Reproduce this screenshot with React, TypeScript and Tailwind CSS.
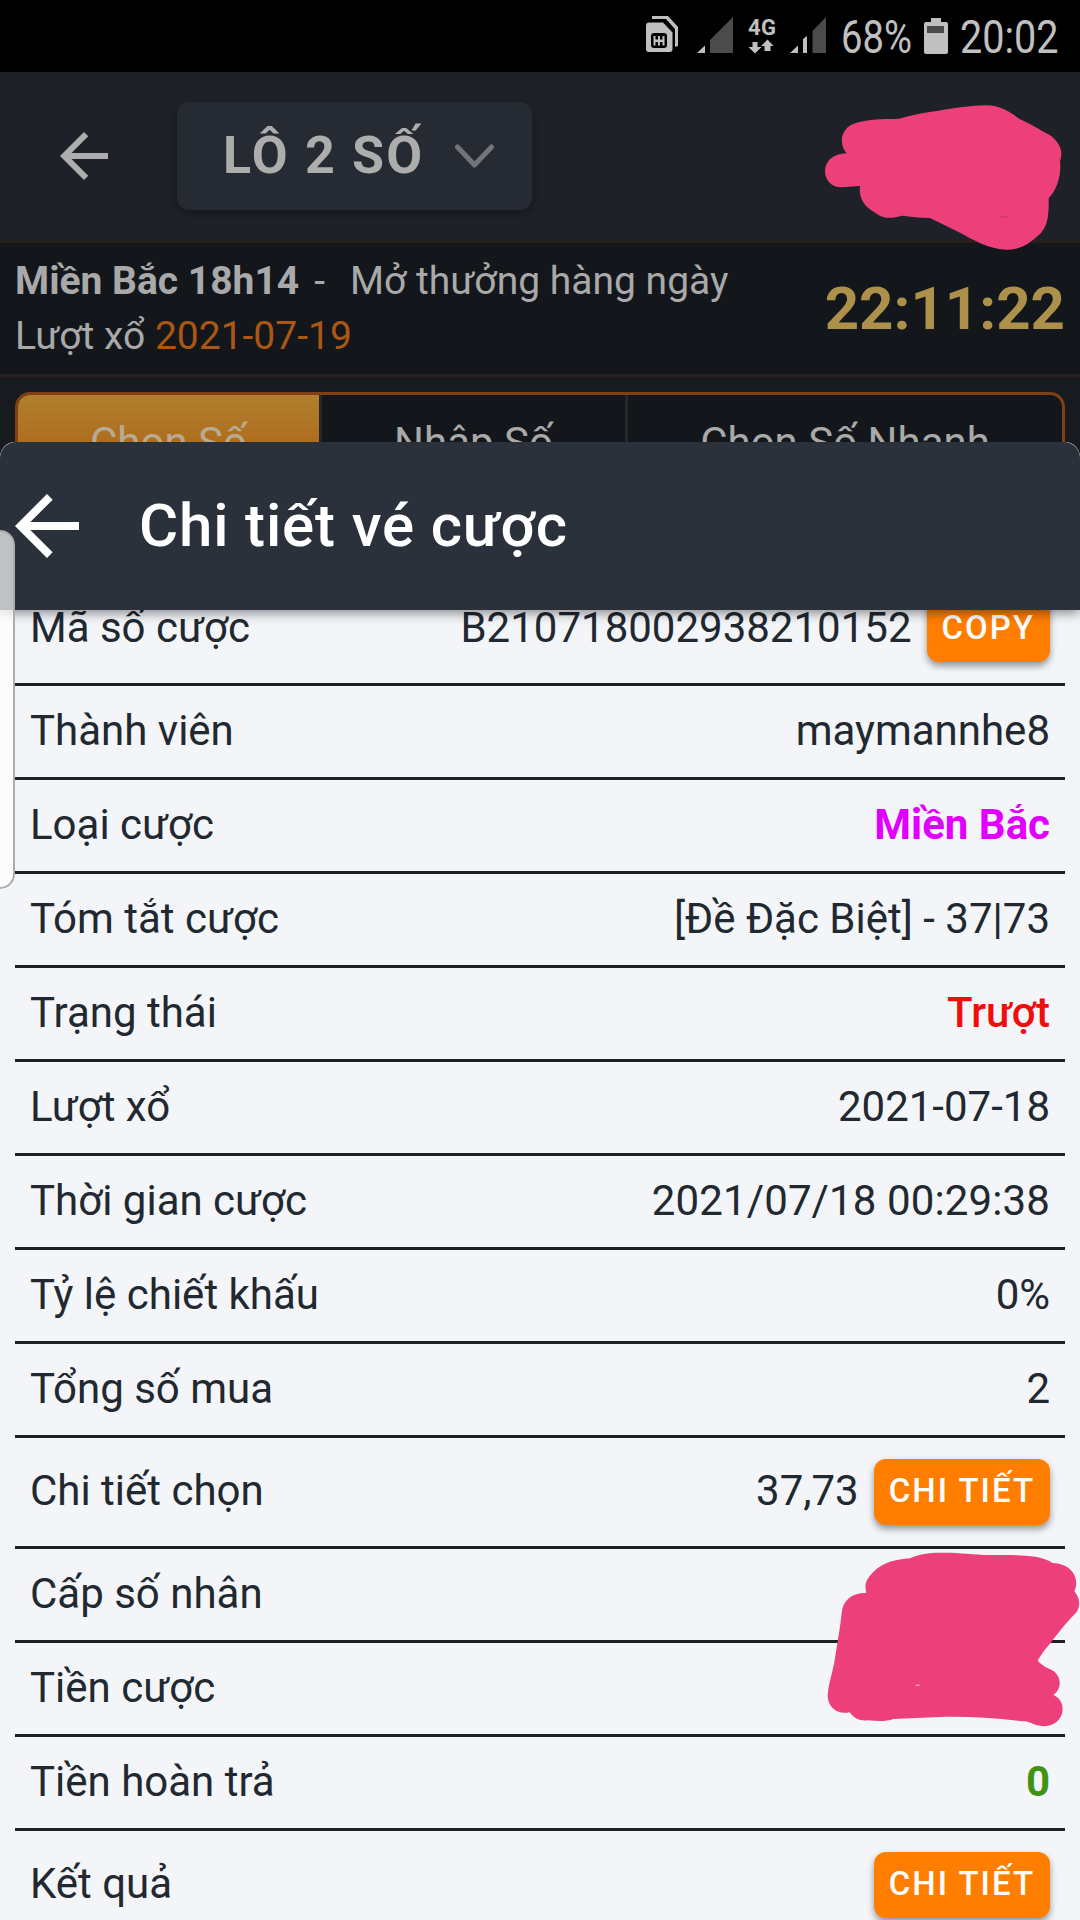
import type { ReactNode } from "react";
import clsx from "clsx";

interface DetailRow {
    label: string;
    value?: string;
    valueClass?: string;
    action?: string;
}

const rows: DetailRow[] = [
    { label: "Mã số cược", value: "B210718002938210152", action: "COPY" },
    { label: "Thành viên", value: "maymannhe8" },
    { label: "Loại cược", value: "Miền Bắc", valueClass: "font-bold text-[#e100ff]" },
    { label: "Tóm tắt cược", value: "[Đề Đặc Biệt] - 37|73" },
    { label: "Trạng thái", value: "Trượt", valueClass: "font-medium text-[#f20d0d]" },
    { label: "Lượt xổ", value: "2021-07-18" },
    { label: "Thời gian cược", value: "2021/07/18 00:29:38", valueClass: "tracking-[0.12px]" },
    { label: "Tỷ lệ chiết khấu", value: "0%" },
    { label: "Tổng số mua", value: "2" },
    { label: "Chi tiết chọn", value: "37,73", action: "CHI TIẾT" },
    { label: "Cấp số nhân" },
    { label: "Tiền cược" },
    { label: "Tiền hoàn trả", value: "0", valueClass: "font-bold text-[#3f9214]" },
    { label: "Kết quả", action: "CHI TIẾT" },
];

function ArrowBack({ className }: { className?: string }) {
    return (
        <svg viewBox="4 4 16 16" fill="currentColor" className={className}>
            <path d="M20 11H7.83l5.59-5.59L12 4l-8 8 8 8 1.41-1.41L7.83 13H20v-2z" />
        </svg>
    );
}

function StatusBar() {
    return (
        <div className="flex h-[72px] items-center bg-black text-[#c0c0c0]">
            {/* SIM, signal and network icons */}
            <svg viewBox="620 0 210 72" className="ml-[620px] h-[72px] w-[210px] shrink-0" fill="currentColor">
                <path d="M652 16h16l10 11v19l-3 1V29l-9-10h-14z" />
                <path d="M649 22.500h14l9.500 10V49q0 3-3 3H649q-3 0-3-3V25.500q0-3 3-3z" />
                <rect x="651" y="33" width="16" height="15" rx="3" fill="#000" />
                <path d="M653.500 36h2v3.500h2.500V36h2v3.500h2.500V36h2v9.500h-2V42H660v3.500h-2V42h-2.500v3.500h-2z" />
                <path d="M697 53l8-7.500V53z" />
                <path d="M710 53V40l23-23v36z" fill="#4b4b4b" />
                <path d="M752.500 42h5v5h4l-6.500 6.500-6.500-6.500h4z" />
                <path d="M764.500 51h6v-5h3l-6-6.500-6.500 6.500h3.500z" />
                <path d="M790 53l8-7.500V53zM803 53V39l4-3v17z" />
                <path d="M812.500 53V31L826 17v36z" fill="#4b4b4b" />
                <text x="748" y="35" fontSize="22" fontWeight="700" className="font-[Roboto]" textLength="28">4G</text>
            </svg>
            <span className="mt-[2px] ml-[11px] w-[71px] shrink-0 origin-left scale-x-[0.83] text-[46px]">68%</span>
            <svg viewBox="0 0 24 36" className="ml-[12px] h-[36px] w-[24px] shrink-0" fill="currentColor">
                <path d="M7 0h10v4h5q2 0 2 2v28q0 2-2 2H2q-2 0-2-2V6q0-2 2-2h5z" />
                <path d="M3 8h17v7H3z" fill="#4b4b4b" />
            </svg>
            <span className="mt-[2px] ml-[12px] w-[100px] shrink-0 origin-left scale-x-[0.86] text-[46px]">20:02</span>
        </div>
    );
}

function AppHeader() {
    return (
        <div className="relative flex h-[171px] items-center border-b-[3px] border-[#281e1b] bg-[#1e2228]">
            <ArrowBack className="ml-[60px] size-12 shrink-0 text-[#adadad]" />
            <div className="ml-[69px] -mt-px flex h-[108px] w-[355px] items-center rounded-xl bg-[#262a32] pl-[46px] shadow-[0_3px_10px_rgba(0,0,0,0.35)]">
                <span className="w-[232px] text-[52px] leading-none font-bold tracking-[2.2px] whitespace-nowrap text-[#adadad]">
                    LÔ 2 SỐ
                </span>
                <svg viewBox="0 0 40 24" className="h-6 w-10 text-[#73747a]" fill="none" stroke="currentColor" strokeWidth="5" strokeLinecap="round" strokeLinejoin="round">
                    <path d="M2.500 3l17 18L36.500 3" />
                </svg>
            </div>
            {/* Marker over the balance */}
            <svg viewBox="0 0 840 486" className="absolute top-[18px] left-[800px] z-10 h-[162px] w-[280px]" fill="#ed407a">
                <path d="M140 190C116 162 122 120 157 103C190 88 245 87 298 86C330 76 360 70 395 65C450 58 500 46 560 46C600 46 630 66 660 88C690 100 725 124 753 137C782 163 790 184 780 213C785 255 770 302 746 324C747 375 744 410 716 436C687 462 660 480 621 479C570 478 520 450 480 428L390 384C360 384 330 380 307 377C278 385 252 389 226 368C186 347 177 318 180 288L125 292C95 293 75 270 75 243C75 214 99 191 140 190z" />
                <path d="M602 381q14 2 24-2" fill="none" stroke="#8f2b50" strokeWidth="1.500" />
            </svg>
        </div>
    );
}

function DrawInfo() {
    return (
        <div className="flex h-[134px] items-center justify-between border-b-[3px] border-[#281e1b] bg-[#13171b] pr-[15px] pl-[15px]">
            <div className="text-[39px] leading-[55px] whitespace-pre text-[#a9a9aa]">
                <div>
                    <b>Miền Bắc 18h14</b>
                    <span className="ml-[15px]">-</span>
                    <span className="ml-[25px]">Mở thưởng hàng ngày</span>
                </div>
                <div>
                    Lượt xổ <span className="text-[#aa5713]">2021-07-19</span>
                </div>
            </div>
            <span className="text-[60px] font-bold text-[#ad914a]">22:11:22</span>
        </div>
    );
}

function Tab({ className, children }: { className: string; children: ReactNode }) {
    return <div className={clsx("h-full pt-[20px] text-center text-[42px] leading-[56px]", className)}>{children}</div>;
}

function ActionButton({ children }: { children: ReactNode }) {
    return (
        <button className="ml-[15px] flex h-[66px] items-center rounded-xl bg-[#ff7e00] px-[15px] pb-[3px] text-[33px] font-medium tracking-[2px] text-white shadow-[0_4px_7px_rgba(0,0,0,0.4)]">
            {children}
        </button>
    );
}

export default function App() {
    return (
        <div className="relative flex h-[1920px] w-[1080px] flex-col overflow-hidden bg-[#171b1f] font-[Roboto,'Liberation_Sans',sans-serif]">
            <StatusBar />
            <AppHeader />
            <DrawInfo />
            <div className="mx-[15px] mt-[15px] -mb-[50px] flex h-[100px] shrink-0 overflow-hidden rounded-t-[15px] border-[3px] border-[#803f14] bg-[#13171b] text-[#a9a9aa]">
                <Tab className="w-[301px] bg-linear-to-b from-[#b0802e] to-[#ab5a0b] text-[#b9ab93]">Chọn Số</Tab>
                <Tab className="w-[309px] border-x-[3px] border-[#25282b]">Nhập Số</Tab>
                <Tab className="flex-1">Chọn Số Nhanh</Tab>
            </div>

            {/* Ticket detail sheet */}
            <div className="relative flex-1 overflow-hidden rounded-t-[15px] bg-[#f3f5f9]">
                <div className="relative z-10 flex h-[168px] items-center rounded-t-[16px] bg-[#2b313b] pl-[15px] text-white shadow-[0_3px_12px_rgba(0,0,0,0.45)]">
                    <ArrowBack className="size-16" />
                    <h1 className="ml-[60px] text-[60px] font-medium tracking-[0.85px]">Chi tiết vé cược</h1>
                </div>
                <div className="-mt-[35px] px-[15px] text-[42px] leading-[50px] text-[#212830]">
                    {rows.map((row) => (
                        <div
                            key={row.label}
                            className={clsx(
                                "flex items-center border-b-[3px] border-[#1d2027] px-[15px]",
                                row.action ? "h-[111px]" : "h-[94px]"
                            )}
                        >
                            <span className="mb-[2px] flex-1">{row.label}</span>
                            <span className={clsx("mb-[2px]", row.valueClass)}>{row.value}</span>
                            {row.action && <ActionButton>{row.action}</ActionButton>}
                        </div>
                    ))}
                </div>
            </div>

            {/* Edge panel handle */}
            <div className="absolute top-[530px] -left-1 z-20 h-[359px] w-[19px] rounded-r-[15px] border-2 border-[#adadad] bg-white/70" />

            {/* Marker over the stake */}
            <svg viewBox="801 390 759 540" className="absolute top-[1550px] left-[827px] h-[180px] w-[253px]" fill="#ed407a">
                <path d="M919 519C912 490 919 480 937 459C967 426 1010 418 1050 415C1085 398 1120 398 1155 398C1200 398 1240 404 1290 405C1350 405 1400 404 1435 412C1452 417 1467 422 1478 429C1535 431 1561 474 1543 514C1560 533 1564 562 1544 583C1515 611 1477 663 1475 665C1457 685 1447 698 1433 722C1455 744 1467 744 1484 755C1506 777 1504 807 1480 825C1507 837 1512 862 1505 884C1492 916 1460 923 1431 916C1412 910 1404 904 1392 904C1310 894 1220 889 1140 891L1000 897C980 905 952 904 924 901C900 904 883 896 869 877C830 885 802 860 803 825C805 792 821 747 826 708C833 665 840 625 845 580C848 541 875 518 919 519z" />
                <path d="M1067 794h12v4h-12z" fill="#f6a3bf" />
            </svg>
        </div>
    );
}
